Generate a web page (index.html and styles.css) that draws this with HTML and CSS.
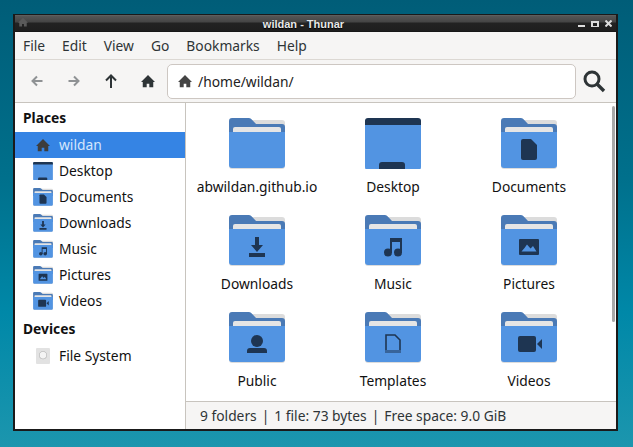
FILE: index.html
```html
<!DOCTYPE html>
<html lang="en">
<head>
    <meta charset="UTF-8">
    <meta name="viewport" content="width=device-width, initial-scale=1.0">
    <title>wildan - Thunar</title>
    <link rel="stylesheet" href="styles.css">
</head>
<body>
    <!-- Shared icon parts -->
    <svg class="defs">
        <defs>
            <g id="folder">
                <rect y="2" x="0" width="56" height="49" rx="3" fill="#dcdcdc"/>
                <path d="M3 0h16.500q1.800 0 3 1.200L27 6h26q3 0 3 3v14H0V3q0-3 3-3z" fill="#4a7ab6"/>
                <rect x="4" y="9" width="48" height="10" rx="2" fill="#e5e5e5"/>
                <path d="M0 14H56V47q0 3-3 3H3q-3 0-3-3z" fill="#5294e2"/>
            </g>
            <g id="desktop">
                <rect x="0" y="1" width="56" height="51" rx="3" fill="#5294e2"/>
                <path d="M0 7V3q0-3 3-3H53q3 0 3 3V7z" fill="#1e3552"/>
                <path d="M14 51V47q0-3 3-3H37q3 0 3 3V51z" fill="#1e3552"/>
            </g>
            <path id="g-documents" d="M20 23q0-2 2-2h8l6 6v13q0 2-2 2H22q-2 0-2-2z" fill="#1e3552"/>
            <path id="g-downloads" d="M26 22h4v8h4l-6 7-6-7h4zM20 38h16v4H20z" fill="#1e3552"/>
            <g id="g-music" fill="#1e3552">
                <circle cx="23" cy="37.500" r="4"/>
                <circle cx="33" cy="37.500" r="4"/>
                <path d="M25 38V23H37V38H35V27H27V38z"/>
            </g>
            <path id="g-pictures" fill="#1e3552" fill-rule="evenodd" d="M19 24H37q1 0 1 1V39q0 1-1 1H19q-1 0-1-1V25q0-1 1-1zM20.500 36.500H35.500L32 31l-2.500 2.500L26 29.500 23.500 33z"/>
            <g id="g-public" fill="#1e3552">
                <circle cx="28" cy="29" r="6"/>
                <path d="M18 41v-2q0-3 3-3h14q3 0 3 3v2z"/>
            </g>
            <g id="g-templates">
                <path d="M21 38V23h9l5 5v10" fill="none" stroke="#1e3552" stroke-width="1.600"/>
                <path d="M20.500 39.500H36" fill="none" stroke="#1e3552" stroke-width="3" stroke-dasharray="1 1"/>
            </g>
            <g id="g-videos" fill="#1e3552">
                <rect x="17" y="24" width="18" height="16" rx="2"/>
                <path d="M36 32l5-5v10z"/>
            </g>
            <path id="home" d="M8 1 0 9h2v6h4.500v-4h3v4H14V9h2z"/>
        </defs>
    </svg>

    <div class="window">
        <div class="titlebar">
            <svg class="title-app" viewBox="0 0 16 16"><use href="#home"/></svg>
            <span class="title-text">wildan - Thunar</span>
            <div class="title-buttons">
                <span class="btn-min"></span>
                <span class="btn-max"></span>
                <svg class="btn-close" viewBox="0 0 7 7"><path d="M.5.500l6 6M6.500.500l-6 6" stroke="#ddd" stroke-width="2"/></svg>
            </div>
        </div>

        <div class="menubar">
            <span>File</span>
            <span>Edit</span>
            <span>View</span>
            <span>Go</span>
            <span>Bookmarks</span>
            <span>Help</span>
        </div>

        <div class="toolbar">
            <div class="nav-button">
                <svg width="12" height="12" viewBox="0 0 12 12"><path d="M11.500 6H2M6 1.500 1.500 6 6 10.500" fill="none" stroke="#8f9294" stroke-width="2"/></svg>
            </div>
            <div class="nav-button">
                <svg width="12" height="12" viewBox="0 0 12 12"><path d="M.5 6H10M6 1.500 10.500 6 6 10.500" fill="none" stroke="#8f9294" stroke-width="2"/></svg>
            </div>
            <div class="nav-button">
                <svg width="12" height="14" viewBox="0 0 12 14"><path d="M6 14V2M1 6.500 6 1.500l5 5" fill="none" stroke="#2e3436" stroke-width="2"/></svg>
            </div>
            <div class="nav-button">
                <svg class="icon-home" viewBox="0 0 16 16"><use href="#home"/></svg>
            </div>
            <div class="location">
                <svg class="icon-home" viewBox="0 0 16 16"><use href="#home"/></svg>
                <span>/home/wildan/</span>
            </div>
            <svg class="search" width="24" height="24" viewBox="0 0 24 24"><circle cx="10" cy="10" r="7" fill="none" stroke="#2e3436" stroke-width="3"/><path d="M15 15l7 7" stroke="#2e3436" stroke-width="3.400"/></svg>
        </div>

        <div class="main">
            <div class="sidebar">
                <div class="side-title">Places</div>
                <div class="side-row selected">
                    <span class="side-icon"><svg class="icon-home" viewBox="0 0 16 16"><use href="#home"/></svg></span>
                    <span class="side-label">wildan</span>
                </div>
                <div class="side-row">
                    <svg class="side-folder" viewBox="0 0 56 51"><use href="#desktop"/></svg>
                    <span class="side-label">Desktop</span>
                </div>
                <div class="side-row">
                    <svg class="side-folder" viewBox="0 0 56 51"><use href="#folder"/><use href="#g-documents" transform="translate(-7 -8) scale(1.250)"/></svg>
                    <span class="side-label">Documents</span>
                </div>
                <div class="side-row">
                    <svg class="side-folder" viewBox="0 0 56 51"><use href="#folder"/><use href="#g-downloads" transform="translate(-7 -8) scale(1.250)"/></svg>
                    <span class="side-label">Downloads</span>
                </div>
                <div class="side-row">
                    <svg class="side-folder" viewBox="0 0 56 51"><use href="#folder"/><use href="#g-music" transform="translate(-7 -8) scale(1.250)"/></svg>
                    <span class="side-label">Music</span>
                </div>
                <div class="side-row">
                    <svg class="side-folder" viewBox="0 0 56 51"><use href="#folder"/><use href="#g-pictures" transform="translate(-7 -8) scale(1.250)"/></svg>
                    <span class="side-label">Pictures</span>
                </div>
                <div class="side-row">
                    <svg class="side-folder" viewBox="0 0 56 51"><use href="#folder"/><use href="#g-videos" transform="translate(-7 -8) scale(1.250)"/></svg>
                    <span class="side-label">Videos</span>
                </div>
                <div class="side-title">Devices</div>
                <div class="side-row">
                    <span class="side-icon"><span class="disk"></span></span>
                    <span class="side-label">File System</span>
                </div>
            </div>

            <div class="content">
                <div class="files">
                    <div class="file">
                        <svg class="file-icon" viewBox="0 0 56 51"><use href="#folder"/></svg>
                        <span class="file-name">abwildan.github.io</span>
                    </div>
                    <div class="file">
                        <svg class="file-icon" viewBox="0 0 56 51"><use href="#desktop"/></svg>
                        <span class="file-name">Desktop</span>
                    </div>
                    <div class="file">
                        <svg class="file-icon" viewBox="0 0 56 51"><use href="#folder"/><use href="#g-documents"/></svg>
                        <span class="file-name">Documents</span>
                    </div>
                    <div class="file">
                        <svg class="file-icon" viewBox="0 0 56 51"><use href="#folder"/><use href="#g-downloads"/></svg>
                        <span class="file-name">Downloads</span>
                    </div>
                    <div class="file">
                        <svg class="file-icon" viewBox="0 0 56 51"><use href="#folder"/><use href="#g-music"/></svg>
                        <span class="file-name">Music</span>
                    </div>
                    <div class="file">
                        <svg class="file-icon" viewBox="0 0 56 51"><use href="#folder"/><use href="#g-pictures"/></svg>
                        <span class="file-name">Pictures</span>
                    </div>
                    <div class="file">
                        <svg class="file-icon" viewBox="0 0 56 51"><use href="#folder"/><use href="#g-public"/></svg>
                        <span class="file-name">Public</span>
                    </div>
                    <div class="file">
                        <svg class="file-icon" viewBox="0 0 56 51"><use href="#folder"/><use href="#g-templates"/></svg>
                        <span class="file-name">Templates</span>
                    </div>
                    <div class="file">
                        <svg class="file-icon" viewBox="0 0 56 51"><use href="#folder"/><use href="#g-videos"/></svg>
                        <span class="file-name">Videos</span>
                    </div>
                </div>
                <div class="scrollbar"></div>
                <div class="statusbar">
                    <span>9 folders</span>
                    <span>|</span>
                    <span>1 file: 73 bytes</span>
                    <span>|</span>
                    <span>Free space: 9.0 GiB</span>
                </div>
            </div>
        </div>
    </div>
</body>
</html>
```

FILE: styles.css
```css
html, body {
    height: 100%;
}
body {
    margin: 0;
    padding: 14px 15px 16px 13px;
    box-sizing: border-box;
    background: linear-gradient(to bottom, #005d78 0%, #00708c 40%, #0088a8 70%, #1c96ae 100%);
    font-family: "Noto Sans", sans-serif;
    font-size: 13.800px;
    color: #111;
    overflow: hidden;
}
.defs {
    display: none;
}
.window {
    display: flex;
    flex-direction: column;
    height: 100%;
    box-sizing: border-box;
    border: 2px solid #1a1a1a;
    border-top-width: 1px;
    background: #fff;
}

/* Title bar */
.titlebar {
    display: flex;
    align-items: center;
    justify-content: center;
    position: relative;
    height: 17px;
    flex: none;
    padding-right: 24px;
    background: linear-gradient(to bottom, #666 0, #555 1px, #454545 7px, #222 8px, #1e1e1e 16px, #111 17px);
}
.title-app {
    position: absolute;
    left: 3px;
    top: 2px;
    width: 10px;
    height: 10px;
    fill: #5a5a5a;
}
.title-text {
    font-family: "Liberation Sans", sans-serif;
    font-size: 11px;
    font-weight: bold;
    color: #e8e8e8;
    text-shadow: 0 1px 1px #000;
}
.title-buttons {
    position: absolute;
    right: 4px;
    top: 5px;
    display: flex;
    gap: 6px;
    align-items: flex-end;
}
.btn-min {
    width: 7px;
    height: 2px;
    background: #ddd;
}
.btn-max {
    width: 4px;
    height: 3px;
    border: 2px solid #ddd;
    border-top-width: 2px;
    border-bottom-width: 1px;
}
.btn-close {
    width: 7px;
    height: 7px;
}

/* Menu and toolbar */
.menubar {
    display: flex;
    flex: none;
    height: 27px;
    align-items: center;
    padding-left: 8px;
    gap: 17px;
    background: #f6f5f4;
    border-bottom: 1px solid #dcd8d3;
    color: #2e3436;
}
.toolbar {
    display: flex;
    flex: none;
    height: 42px;
    align-items: center;
    padding-left: 3px;
    background: #f6f5f4;
    border-bottom: 1px solid #c8c4be;
}
.nav-button {
    display: flex;
    width: 37px;
    height: 34px;
    align-items: center;
    justify-content: center;
}
.icon-home {
    width: 14px;
    height: 14px;
    fill: #2e3436;
}
.location {
    display: flex;
    align-items: center;
    gap: 6px;
    width: 409px;
    height: 35px;
    box-sizing: border-box;
    margin-left: 1px;
    padding-left: 10px;
    background: #fff;
    border: 1px solid #cdc7c2;
    border-radius: 5px;
    color: #222;
}
.location .icon-home {
    fill: #444;
}
.search {
    margin-left: 6px;
}

/* Main area */
.main {
    display: flex;
    flex: 1;
    min-height: 0;
}
.sidebar {
    width: 170px;
    flex: none;
    border-right: 1px solid #c8c4be;
    background: #fff;
}
.side-title {
    height: 29px;
    line-height: 29px;
    padding-left: 8px;
    font-weight: bold;
}
.side-row {
    display: flex;
    align-items: center;
    gap: 6px;
    height: 26px;
    padding-left: 18px;
}
.side-label {
    padding-bottom: 2px;
}
.side-row.selected {
    background: #3584e4;
    color: #d4e6fc;
}
.side-row.selected .icon-home {
    fill: #3d3d3d;
}
.side-icon {
    display: flex;
    width: 20px;
    justify-content: center;
}
.side-folder {
    width: 20px;
    height: 18px;
}
.disk {
    display: flex;
    width: 14px;
    height: 16px;
    box-sizing: border-box;
    border-radius: 1px;
    background: radial-gradient(circle at 50% 45%, #f4f4f4 0 3px, #c9c9c9 3.500px 4px, #e2e2e2 4.500px);
}

.content {
    display: flex;
    flex: 1;
    flex-direction: column;
    position: relative;
    min-width: 0;
}
.files {
    display: grid;
    flex: 1;
    grid-template-columns: repeat(3, 136px);
    grid-auto-rows: 80px;
    row-gap: 17px;
    padding: 15px 0 0 3px;
    overflow: hidden;
}
.file {
    display: flex;
    flex-direction: column;
    align-items: center;
}
.file-icon {
    width: 56px;
    height: 51px;
    flex: none;
}
.file-name {
    margin-top: 7px;
    line-height: 22px;
    white-space: nowrap;
}
.scrollbar {
    position: absolute;
    top: 3px;
    right: 1px;
    width: 3px;
    height: 216px;
    border-radius: 2px;
    background: #a9a9a9;
}
.statusbar {
    display: flex;
    flex: none;
    gap: 5px;
    height: 27px;
    line-height: 27px;
    padding-left: 14px;
    background: #f6f5f4;
    border-top: 1px solid #c8c4be;
    color: #2e3436;
}
```
